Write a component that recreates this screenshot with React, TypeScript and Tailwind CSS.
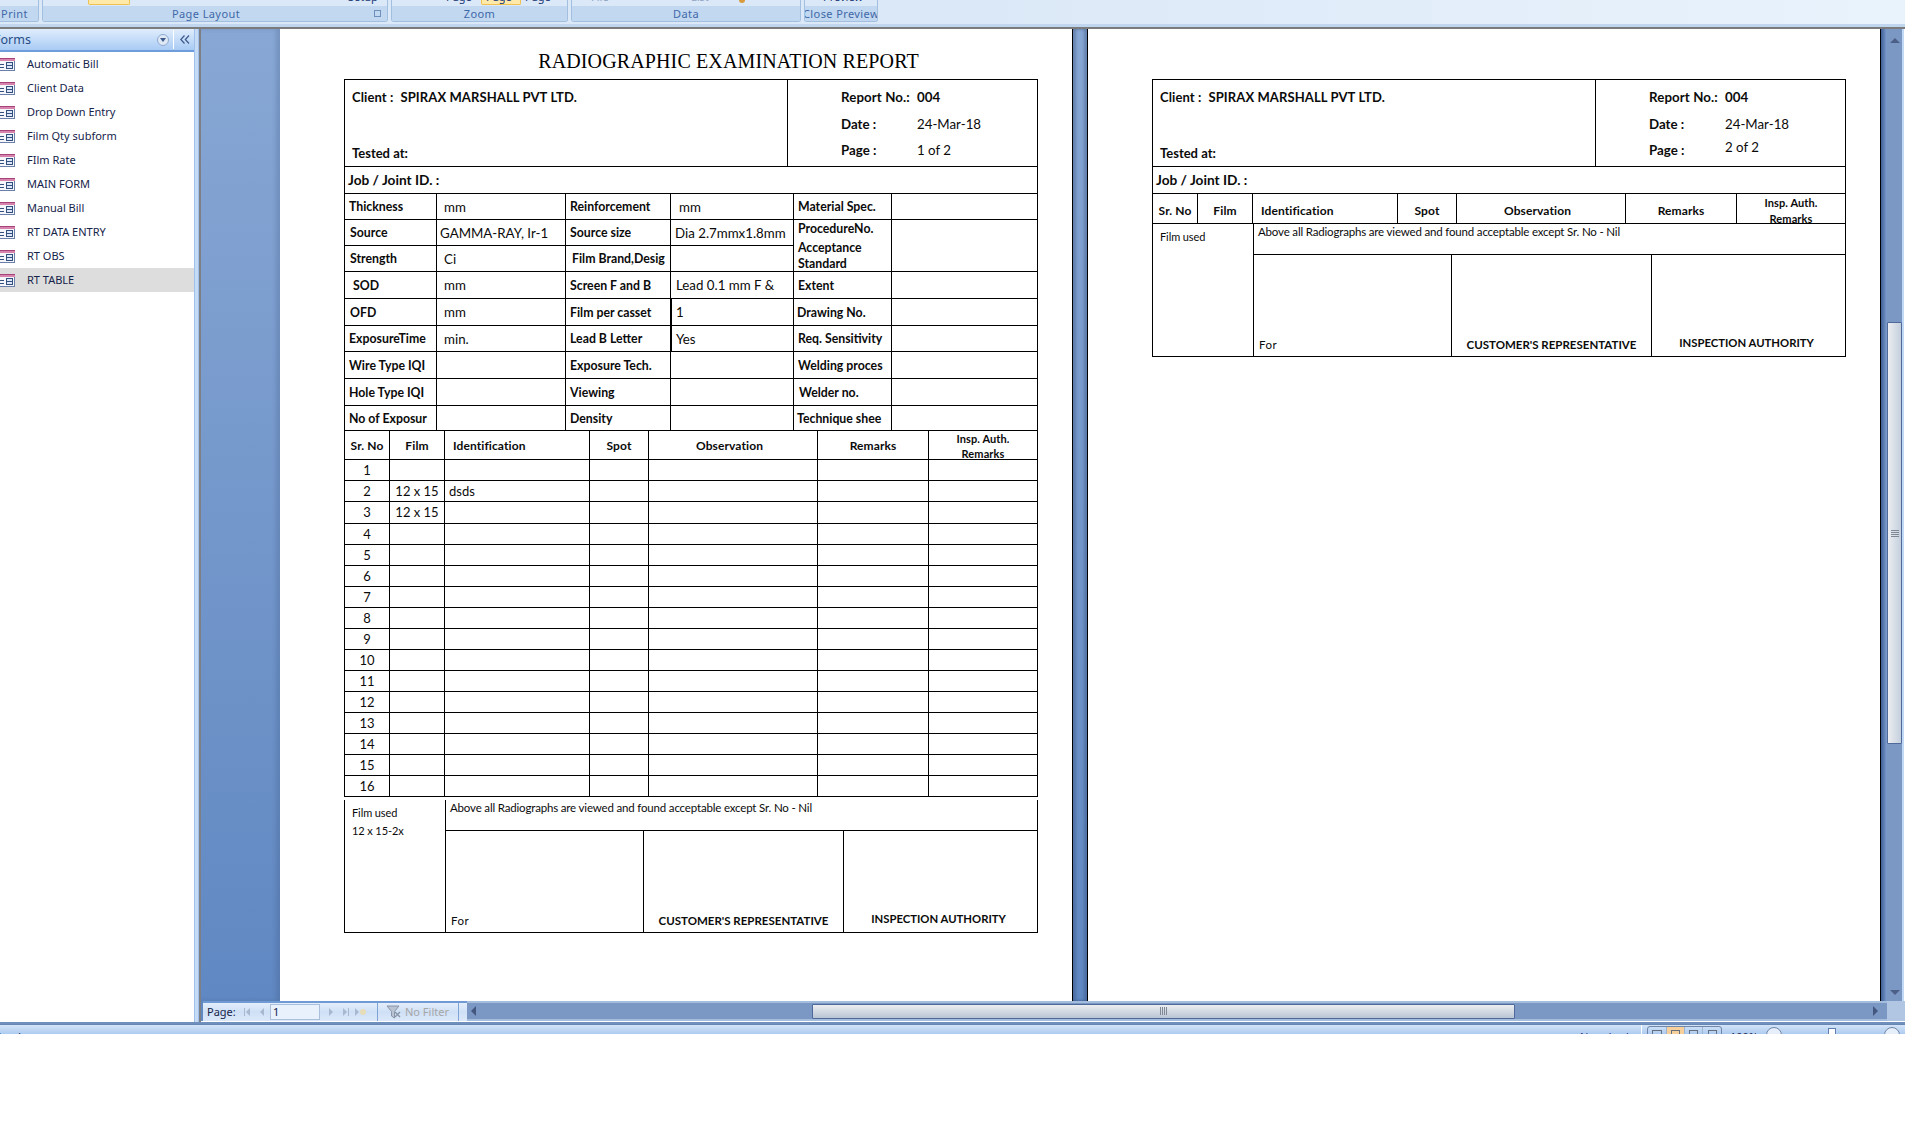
const FORMS = [
  "Automatic Bill",
  "Client Data",
  "Drop Down Entry",
  "Film Qty subform",
  "FIlm Rate",
  "MAIN FORM",
  "Manual Bill",
  "RT DATA ENTRY",
  "RT OBS",
  "RT TABLE",
];

// each cell: text, left padding, bold
const SPEC_ROWS: { cells: [string, string, boolean][] }[] = [
  { cells: [["Thickness", "pl-[4px]", true], ["mm", "pl-[7px]", false], ["Reinforcement", "pl-[4px]", true], ["mm", "pl-[8px]", false], ["Material Spec.", "pl-[4px]", true], ["", "", false]] },
  { cells: [["Source", "pl-[5px]", true], ["GAMMA-RAY, Ir-1", "pl-[3px]", false], ["Source size", "pl-[4px]", true], ["Dia 2.7mmx1.8mm", "pl-[4px]", false]] },
  { cells: [["Strength", "pl-[5px]", true], ["Ci", "pl-[7px]", false], ["Film Brand,Desig", "pl-[6px]", true], ["", "", false]] },
  { cells: [["SOD", "pl-[8px]", true], ["mm", "pl-[7px]", false], ["Screen F and B", "pl-[4px]", true], ["Lead 0.1 mm F &", "pl-[5px]", false], ["Extent", "pl-[4px]", true], ["", "", false]] },
  { cells: [["OFD", "pl-[5px]", true], ["mm", "pl-[7px]", false], ["Film per casset", "pl-[4px]", true], ["1", "pl-[4px]", false], ["Drawing No.", "pl-[3px]", true], ["", "", false]] },
  { cells: [["ExposureTime", "pl-[4px]", true], ["min.", "pl-[7px]", false], ["Lead B Letter", "pl-[4px]", true], ["Yes", "pl-[4px]", false], ["Req. Sensitivity", "pl-[4px]", true], ["", "", false]] },
  { cells: [["Wire Type IQI", "pl-[4px]", true], ["", "", false], ["Exposure Tech.", "pl-[4px]", true], ["", "", false], ["Welding proces", "pl-[4px]", true], ["", "", false]] },
  { cells: [["Hole Type IQI", "pl-[4px]", true], ["", "", false], ["Viewing", "pl-[4px]", true], ["", "", false], ["Welder no.", "pl-[5px]", true], ["", "", false]] },
  { cells: [["No of Exposur", "pl-[4px]", true], ["", "", false], ["Density", "pl-[4px]", true], ["", "", false], ["Technique shee", "pl-[3px]", true], ["", "", false]] },
];

const DETAIL_COLS = "grid grid-cols-[45px_55px_145px_59px_169px_111px_1fr]";

function FormIcon() {
  return (
    <svg width="15" height="13" viewBox="0 0 15 13" className="shrink-0">
      <rect x="-1" y="0.5" width="15.5" height="12" fill="#f4f6fb" stroke="#6a7fa8" />
      <rect x="0" y="0" width="15" height="1" fill="#a8437a" />
      <rect x="0" y="1" width="15" height="2" fill="#d684ad" />
      <rect x="0" y="6" width="4" height="1" fill="#33507f" />
      <rect x="0" y="9" width="4" height="1" fill="#33507f" />
      <rect x="6.5" y="4.5" width="6" height="3" fill="#dbe6f6" stroke="#33507f" />
      <rect x="6.5" y="7.5" width="6" height="3" fill="#dbe6f6" stroke="#33507f" />
    </svg>
  );
}

function NavPane() {
  return (
    <div className="flex h-full w-[194px] shrink-0 flex-col overflow-hidden bg-white">
      <div className="flex h-[23px] shrink-0 items-center border-b-2 border-[#6f9ddb] bg-gradient-to-b from-[#e0edfc] to-[#a9cbf4]">
        <span className="-ml-[6px] w-[163px] pt-[1px] text-[12.5px] text-[#274c86] font-['Noto_Sans',sans-serif]">Forms</span>
        <span className="flex h-[12px] w-[12px] items-center justify-center rounded-full border border-[#8ea9cf] bg-[#dfe9f6]">
          <span className="h-0 w-0 border-x-[3px] border-t-[4px] border-x-transparent border-t-[#3d5a8c]" />
        </span>
        <span className="ml-[4px] h-[19px] w-px bg-white" />
        <svg width="10" height="9" viewBox="0 0 10 9" fill="none" stroke="#3d5a8c" strokeWidth="1.2" className="ml-[6px]">
          <path d="M4.5 0.5L0.8 4.5L4.5 8.5M9 0.5L5.3 4.5L9 8.5" />
        </svg>
      </div>
      {FORMS.map((name) => (
        <div
          key={name}
          className={`flex h-[24px] shrink-0 items-center gap-[12px] text-[11px] text-[#15234a] font-['Noto_Sans',sans-serif] ${
            name === "RT TABLE" ? "bg-[#dddddd]" : ""
          }`}
        >
          <FormIcon />
          <span>{name}</span>
        </div>
      ))}
    </div>
  );
}

function Group({
  label,
  width,
  labelClass = "",
  children,
}: {
  label: string;
  width: string;
  labelClass?: string;
  children?: React.ReactNode;
}) {
  return (
    <div className={`relative flex h-[22px] shrink-0 flex-col overflow-hidden rounded-b-[3px] border-x border-b border-[#a3bfe0] ${width}`}>
      <div className="h-[6px] shrink-0 bg-[#dbe8f7]">{children}</div>
      <div className={`flex h-[15px] items-center justify-center whitespace-nowrap bg-[#c2d8f0] text-[11px] leading-none tracking-[0.4px] text-[#3f68a8] font-['Noto_Sans',sans-serif] ${labelClass}`}>
        {label}
      </div>
    </div>
  );
}

function Clipped({ text, className }: { text: string; className: string }) {
  return (
    <span className={`absolute -top-[10px] text-[11px] leading-[14px] text-[#1c3a78] font-['Noto_Sans',sans-serif] ${className}`}>
      {text}
    </span>
  );
}

function Ribbon() {
  return (
    <div className="h-[29px] w-full shrink-0 border-b-2 border-[#7b7b7b] bg-gradient-to-b from-[#dbe8f7] to-[#bfd5ee]">
      <div className="flex h-[24px] items-start gap-[3px] bg-gradient-to-r from-[#dbe8f7] via-[#dbe8f7] to-[#e9f3fc]">
        <Group label="Print" width="w-[49px] -ml-[10px]" />
        <Group label="Page Layout" width="w-[346px]" labelClass="pr-[18px]">
          <span className="absolute left-[45px] top-0 h-[5px] w-[42px] rounded-b-[2px] border border-t-0 border-[#f0c050] bg-[#ffe9a8]" />
          <Clipped text="Setup" className="left-[305px]" />
          <span className="absolute right-[6px] top-[10px] h-[7px] w-[7px] border border-[#6e8fba]" />
        </Group>
        <Group label="Zoom" width="w-[177px]">
          <Clipped text="Page" className="left-[54px]" />
          <span className="absolute left-[89px] top-0 h-[5px] w-[40px] rounded-b-[2px] border border-t-0 border-[#f0c050] bg-[#ffe9a8]" />
          <Clipped text="Page" className="left-[94px]" />
          <Clipped text="Page" className="left-[133px]" />
        </Group>
        <Group label="Data" width="w-[230px]">
          <Clipped text="File" className="left-[19px] opacity-40" />
          <Clipped text="List" className="left-[119px] opacity-40" />
          <span className="absolute left-[167px] top-0 h-[3px] w-[6px] rounded-b-full bg-[#d99a3c]" />
        </Group>
        <Group label="Close Preview" width="w-[74px]" labelClass="tracking-[0.2px]">
          <Clipped text="Preview" className="left-[18px]" />
        </Group>
      </div>
    </div>
  );
}

function Header({ page, valueClass }: { page: string; valueClass: string }) {
  return (
    <div className="flex h-[87px] border-b border-black">
      <div className="flex w-[443px] flex-col justify-between border-r border-black pb-[3px] pl-[7px] pt-[8px] font-bold">
        <div className="flex gap-[7px] text-[13px] tracking-[0.1px]">
          <span>Client :</span>
          <span>SPIRAX MARSHALL PVT LTD.</span>
        </div>
        <div className="text-[13px]">Tested at:</div>
      </div>
      <div className="flex flex-col pl-[53px] pt-[5px] text-[13.3px]">
        <div className="flex h-[26px] items-center">
          <span className="w-[76px] font-bold tracking-[0.1px]">Report No.:</span>
          <span className="font-bold">004</span>
        </div>
        <div className="flex h-[27px] items-center">
          <span className="w-[76px] font-bold">Date :</span>
          <span>24-Mar-18</span>
        </div>
        <div className="flex h-[26px] items-center">
          <span className="w-[76px] font-bold">Page :</span>
          <span className={valueClass}>{page}</span>
        </div>
      </div>
    </div>
  );
}

function JobRow() {
  return <div className="flex h-[27px] items-center border-b border-black pl-[3px] pt-[1px] text-[13.7px] font-bold">Job / Joint ID. :</div>;
}

function SpecGrid() {
  return (
    <div className="grid grid-cols-[92px_129px_105px_123px_98px_1fr] grid-rows-[26px_26px_26px_27px_27px_26px_27px_27px_25px] text-[12.3px]">
      {SPEC_ROWS.map((row, r) =>
        row.cells.map(([text, pad, bold], c) => (
          <div
            key={`${r}-${c}`}
            className={`flex items-center overflow-hidden whitespace-nowrap border-b border-r border-black pt-[2px] ${pad} ${
              bold ? "font-bold" : "text-[13.3px]"
            } ${c === 5 ? "border-r-0" : ""} ${c === 3 && (r === 4 || r === 5) ? "border-l border-l-black" : ""}`}
          >
            {text}
          </div>
        )),
      )}
      <div className="col-start-5 row-span-2 row-start-2 flex flex-col justify-center gap-[3px] border-b border-r border-black pl-[4px] pt-[2px] font-bold leading-[16px]">
        <span>ProcedureNo.</span>
        <span>Acceptance<br />Standard</span>
      </div>
      <div className="col-start-6 row-span-2 row-start-2 border-b border-black" />
    </div>
  );
}

function DetailHeader({ clip }: { clip?: boolean }) {
  const pad = clip ? "pt-[4px]" : "pt-[1px]";
  return (
    <div className={`${DETAIL_COLS} ${clip ? "h-[30px]" : "h-[29px]"} border-b border-black text-[12px] font-bold tracking-[0.1px]`}>
      <div className={`flex items-center justify-center border-r border-black ${pad}`}>Sr. No</div>
      <div className={`flex items-center justify-center border-r border-black ${pad}`}>Film</div>
      <div className={`flex items-center border-r border-black pl-[8px] ${pad}`}>Identification</div>
      <div className={`flex items-center justify-center border-r border-black ${pad}`}>Spot</div>
      <div className={`flex items-center justify-center border-r border-black pr-[7px] ${pad}`}>Observation</div>
      <div className={`flex items-center justify-center border-r border-black ${pad}`}>Remarks</div>
      <div className={`flex flex-col items-center overflow-hidden text-[11px] ${clip ? "pt-[1px] leading-[16px]" : "leading-[15px]"}`}>
        <span>Insp. Auth.</span>
        <span>Remarks</span>
      </div>
    </div>
  );
}

function rowHeight(n: number) {
  if (n === 3) return "h-[22px] border-b border-black";
  if (n === 16) return "h-[20px]";
  return "h-[21px] border-b border-black";
}

function DetailRows() {
  const rows = Array.from({ length: 16 }, (_, i) => i + 1);
  return (
    <div className="border-b border-black text-[13px]">
      {rows.map((n) => (
        <div key={n} className={`${DETAIL_COLS} ${rowHeight(n)}`}>
          <div className="flex items-center justify-center border-r border-black pt-[1px]">{n}</div>
          <div className="flex items-center justify-center border-r border-black pt-[1px]">{n === 2 || n === 3 ? "12 x 15" : ""}</div>
          <div className="flex items-center border-r border-black pl-[4px] pt-[1px]">{n === 2 ? "dsds" : ""}</div>
          <div className="border-r border-black" />
          <div className="border-r border-black" />
          <div className="border-r border-black" />
          <div />
        </div>
      ))}
    </div>
  );
}

function Footer({ usage }: { usage?: boolean }) {
  return (
    <div className="flex h-[132px]">
      <div className="flex w-[101px] shrink-0 flex-col gap-[4px] border-r border-black pl-[7px] pt-[6px] text-[11px] leading-[14px] tracking-[-0.1px]">
        <span>Film used</span>
        {usage && <span>12 x 15-2x</span>}
      </div>
      <div className="flex flex-1 flex-col">
        <div className="h-[31px] border-b border-black pl-[4px] pt-[1px] text-[11.5px] leading-[14px] tracking-[-0.17px]">
          Above all Radiographs are viewed and found acceptable except Sr. No - Nil
        </div>
        <div className="flex flex-1 text-[11.5px]">
          <div className="flex w-[198px] items-end border-r border-black pb-[3px] pl-[5px] tracking-[0.5px]">For</div>
          <div className="flex w-[200px] items-end justify-center border-r border-black pb-[3px] font-bold">CUSTOMER'S REPRESENTATIVE</div>
          <div className="flex flex-1 items-end justify-center pb-[4px] pr-[4px] text-[11.3px] font-bold">INSPECTION AUTHORITY</div>
        </div>
      </div>
    </div>
  );
}

function Sheet({ children, title }: { children: React.ReactNode; title?: string }) {
  return (
    <div className="h-full w-[793px] shrink-0 overflow-hidden border-r border-black bg-white pl-[64px]">
      <div className="flex h-[50px] w-[694px] items-center justify-center pl-[75px] pt-[13px] text-[20px] tracking-[0.13px] text-black font-['Liberation_Serif',serif]">
        {title}
      </div>
      <div className="w-[694px] text-[#0b0b0b] font-['Lato',sans-serif]">{children}</div>
    </div>
  );
}

function VerticalScrollbar() {
  return (
    <div className="flex h-full w-[15px] shrink-0 flex-col items-center bg-[#7b98c4]">
      <span className="mt-[9px] h-0 w-0 border-x-[5px] border-b-[5px] border-x-transparent border-b-[#4c5f86]" />
      <div className="mt-[279px] flex h-[422px] w-[15px] items-center justify-center rounded-[1px] border border-[#4f6a9a] bg-gradient-to-r from-[#eceef1] to-[#c4cfdd]">
        <span className="flex flex-col gap-[1px]">
          <span className="h-px w-[8px] bg-[#7f8894]" />
          <span className="h-px w-[8px] bg-[#7f8894]" />
          <span className="h-px w-[8px] bg-[#7f8894]" />
          <span className="h-px w-[8px] bg-[#7f8894]" />
        </span>
      </div>
      <span className="mt-auto mb-[6px] h-0 w-0 border-x-[5px] border-t-[5px] border-x-transparent border-t-[#4c5f86]" />
    </div>
  );
}

function NavTri({ dir, bar, star }: { dir: "left" | "right"; bar?: "left" | "right"; star?: boolean }) {
  return (
    <span className="flex w-[15px] items-center justify-center gap-[1px]">
      {bar === "left" && <span className="h-[8px] w-px bg-[#a7b8cf]" />}
      <span
        className={`h-0 w-0 border-y-[4px] border-y-transparent ${
          dir === "left" ? "border-r-[4px] border-r-[#a7b8cf]" : "border-l-[4px] border-l-[#a7b8cf]"
        }`}
      />
      {bar === "right" && <span className="h-[8px] w-px bg-[#a7b8cf]" />}
      {star && <span className="h-[6px] w-[6px] rounded-full bg-[#e6dcb8]" />}
    </span>
  );
}

function RecordBar() {
  return (
    <div className="flex h-[21px] shrink-0 border-b border-white">
      <div className="w-[2px] bg-[#6088c2]" />
      <div className="flex h-full w-[264px] shrink-0 items-center border-t-2 border-[#6f9ad4] bg-gradient-to-b from-[#e4eefb] via-[#cfe0f6] to-[#dbe8fa] text-[11px] font-['Noto_Sans',sans-serif]">
        <span className="ml-[4px] w-[32px] text-[#15234a]">Page:</span>
        <NavTri dir="left" bar="left" />
        <NavTri dir="left" />
        <span className="ml-[1px] flex h-[16px] w-[50px] items-center border border-[#a9bfdc] bg-[#e8f1fc] pl-[2px] text-[#15234a]">1</span>
        <span className="ml-[3px]" />
        <NavTri dir="right" />
        <NavTri dir="right" bar="right" />
        <NavTri dir="right" star />
        <span className="ml-[9px] h-full w-px bg-[#7fa3d4]" />
        <svg width="16" height="14" viewBox="0 0 16 14" className="ml-[8px] shrink-0">
          <path d="M1 1h12L8.5 6.5V13L5.5 11V6.5Z" fill="#b9c3d2" stroke="#8894a8" strokeWidth="1" />
          <path d="M9 7l5 5M14 7l-5 5" stroke="#8894a8" strokeWidth="1.4" />
        </svg>
        <span className="ml-[3px] w-[53px] text-[#a6a6a6]">No Filter</span>
        <span className="h-full w-px bg-[#7fa3d4]" />
      </div>
      <div className="flex h-full flex-1 items-center border-y-2 border-t-[#a5bddc] border-b-[#a5bddc] bg-[#7b98c4]">
        <span className="ml-[4px] h-0 w-0 border-y-[5px] border-r-[5px] border-y-transparent border-r-[#44577e]" />
        <div className="ml-[336px] flex h-[15px] w-[703px] items-center justify-center rounded-[1px] border border-[#4f6a9a] bg-gradient-to-b from-[#eceef1] to-[#b9c5d4]">
          <span className="flex gap-[1px]">
            <span className="h-[8px] w-px bg-[#7f8894]" />
            <span className="h-[8px] w-px bg-[#7f8894]" />
            <span className="h-[8px] w-px bg-[#7f8894]" />
            <span className="h-[8px] w-px bg-[#7f8894]" />
          </span>
        </div>
        <span className="ml-auto mr-[9px] h-0 w-0 border-y-[5px] border-l-[5px] border-y-transparent border-l-[#44577e]" />
      </div>
      <div className="w-[18px] bg-[#b0c6e2]" />
    </div>
  );
}

function StatusBar() {
  return (
    <div className="flex h-[10px] w-full items-start overflow-hidden border-t border-[#6786b4] bg-gradient-to-b from-[#d4e4f8] to-[#adcbf0] text-[11px] leading-[14px] text-[#15234a] font-['Noto_Sans',sans-serif]">
      <span className="-ml-[5px] pt-[5px]">Ready</span>
      <span className="ml-auto pt-[5px] text-[#1c2f7a]">Num Lock</span>
      <span className="ml-[9px] h-full w-px bg-white" />
      <div className="ml-[5px] mt-[1px] flex h-[14px] w-[75px] rounded-t-[3px] border border-[#6f86a8]">
        <span className="flex w-[19px] justify-center border-r border-[#9fb5d0] pt-[3px]"><span className="h-[8px] w-[10px] border border-[#666f7d]" /></span>
        <span className="flex w-[18px] justify-center border-r border-[#9fb5d0] bg-[#f6cf9a] pt-[3px]"><span className="h-[8px] w-[9px] border border-[#666f7d]" /></span>
        <span className="flex w-[18px] justify-center border-r border-[#9fb5d0] pt-[3px]"><span className="h-[8px] w-[9px] border border-[#666f7d]" /></span>
        <span className="flex flex-1 justify-center pt-[3px]"><span className="h-[8px] w-[9px] border border-[#666f7d]" /></span>
      </div>
      <span className="ml-[8px] w-[26px] overflow-hidden whitespace-nowrap pt-[5px]">100%</span>
      <span className="ml-[10px] mt-[2px] h-[16px] w-[16px] shrink-0 rounded-full border border-[#6f86a8] bg-[#e6eefa]" />
      <span className="ml-[46px] mt-[3px] h-[12px] w-[8px] shrink-0 border border-[#5f7fb0] bg-white" />
      <span className="ml-[48px] mr-[5px] mt-[2px] h-[16px] w-[16px] shrink-0 rounded-full border border-[#6f86a8] bg-[#e6eefa]" />
    </div>
  );
}

export default function App() {
  return (
    <div className="h-[1145px] w-[1920px] overflow-hidden bg-white">
      <div className="flex h-[1034px] w-[1905px] flex-col">
        <Ribbon />
        <div className="flex min-h-0 flex-1 border-b-2 border-[#6f8fbc] bg-white">
          <NavPane />
          <div className="flex h-full w-[7px] shrink-0">
            <div className="w-[5px] border-x border-[#9fc0ea] bg-[#c6dcf6]" />
            <div className="w-[2px] bg-[#7d7f84]" />
          </div>
          <div className="flex min-w-0 flex-1 flex-col">
            <div className="flex min-h-0 flex-1">
              <div className="w-[79px] shrink-0 bg-gradient-to-b from-[#88a7d4] to-[#6088c2] shadow-[inset_-4px_0_4px_rgba(50,70,110,0.2)]" />
              <Sheet title="RADIOGRAPHIC EXAMINATION REPORT">
                <div className="border-x border-t border-black">
                  <Header page="1 of 2" valueClass="" />
                  <JobRow />
                  <SpecGrid />
                  <DetailHeader />
                  <DetailRows />
                </div>
                <div className="mt-[3px] border-x border-b border-black">
                  <Footer usage />
                </div>
              </Sheet>
              <div className="w-[15px] shrink-0 border-r border-black bg-gradient-to-b from-[#88a7d4] to-[#6088c2] shadow-[inset_3px_0_3px_rgba(30,50,90,0.3),inset_-3px_0_3px_rgba(30,50,90,0.3)]" />
              <Sheet>
                <div className="border border-black">
                  <Header page="2 of 2" valueClass="relative -top-[3px]" />
                  <JobRow />
                  <DetailHeader clip />
                  <Footer />
                </div>
              </Sheet>
              <div className="w-[6px] shrink-0 bg-gradient-to-r from-[#3f5f96] to-[#7f9fd0]" />
              <VerticalScrollbar />
              <div className="w-[2px] shrink-0 bg-[#c2d9f6]" />
            </div>
            <RecordBar />
          </div>
        </div>
        <StatusBar />
      </div>
    </div>
  );
}
